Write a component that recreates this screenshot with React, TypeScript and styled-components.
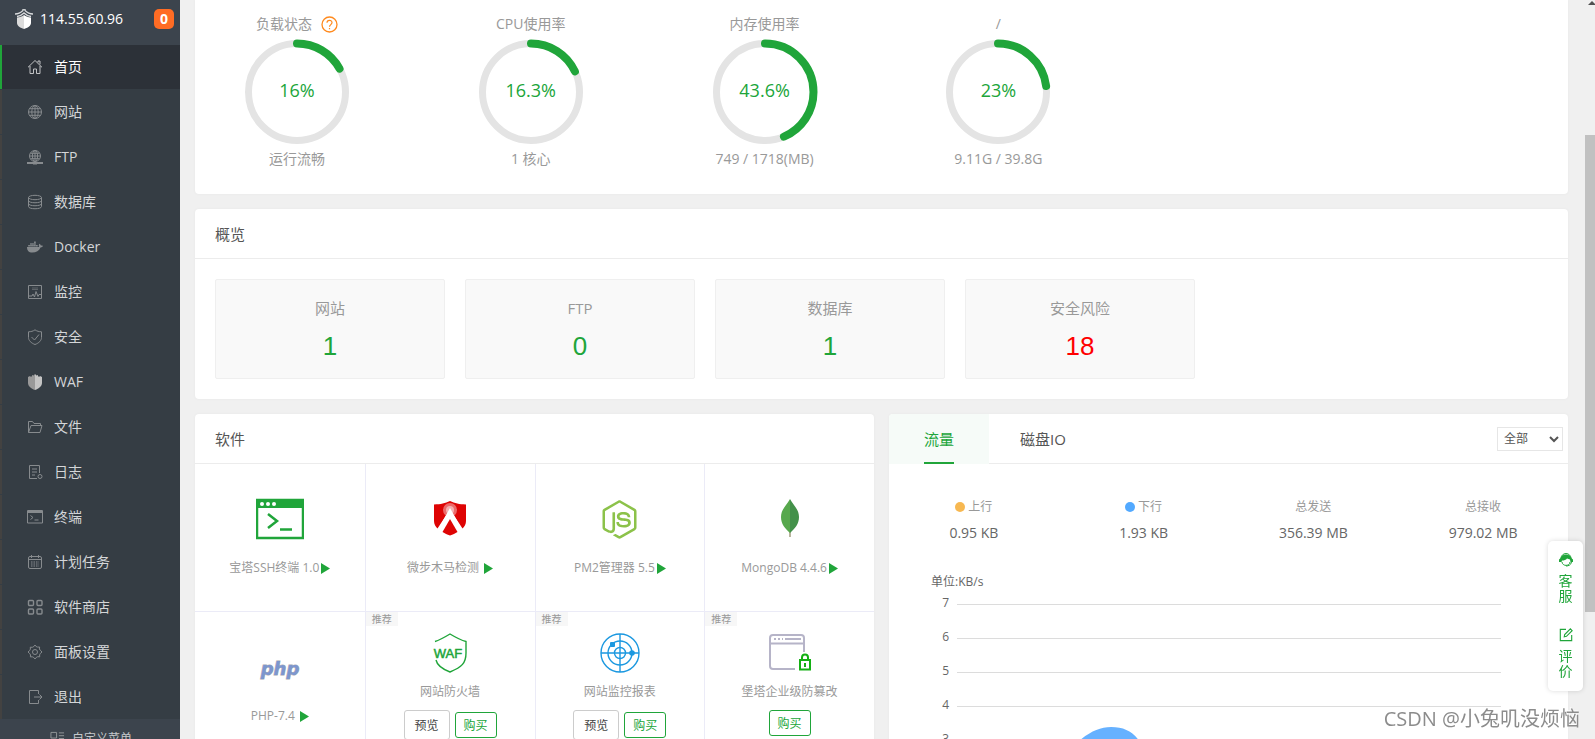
import React from "react";
import styled, { createGlobalStyle } from "styled-components";
import { FaDocker, FaNodeJs } from "react-icons/fa";

const GREEN = "#20a53a";

const GlobalStyle = createGlobalStyle`
  *, *::before, *::after { box-sizing: border-box; }
  body {
    margin: 0;
    overflow: hidden;
    background: #f0f0f0;
    color: #666;
    font-family: "Open Sans", "Noto Sans CJK SC", sans-serif;
    font-size: 12px;
    line-height: 20px;
  }
  button, select { font-family: inherit; }
  ul { list-style: none; margin: 0; padding: 0; }
  svg { display: block; flex: none; }
`;

/* ---------- shell ---------- */

const Shell = styled.div`
  display: flex;
  height: 100vh;
  overflow: hidden;
`;

const Sidebar = styled.aside`
  display: flex;
  flex-direction: column;
  flex: none;
  width: 180px;
  background: #353d44;
`;

const ServerBar = styled.header`
  display: flex;
  align-items: center;
  flex: none;
  height: 45px;
  padding: 0 6px 7px 15px;
  background: #3c444d;
  color: #fff;
  font-size: 14px;
`;

const ServerIp = styled.span`
  flex: 1;
  padding-left: 7px;
`;

const MessageCount = styled.span`
  width: 20px;
  height: 20px;
  border-radius: 5px;
  background: #ff6c24;
  font-weight: 700;
  text-align: center;
`;

const Menu = styled.ul`
  display: flex;
  flex-direction: column;
  flex: none;
  gap: 1px;
`;

const MenuLink = styled.a<{ $active?: boolean }>`
  display: flex;
  align-items: center;
  gap: 11px;
  height: 44px;
  padding-left: 25px;
  border-left: 2px solid ${(p) => (p.$active ? GREEN : "#434241")};
  background: ${(p) => (p.$active ? "#2c3138" : "transparent")};
  color: ${(p) => (p.$active ? "#fff" : "#d4d6d8")};
  font-size: 14px;
  text-decoration: none;

  svg { color: ${(p) => (p.$active ? "#c0c2c4" : "#878b8e")}; }
`;

const CustomMenu = styled.button`
  display: flex;
  flex: none;
  gap: 7px;
  height: 40px;
  padding: 10px 0 0 50px;
  border: 0;
  background: #3c444d;
  color: #c4c7ca;
  font-size: 12px;
  line-height: 20px;

  svg { margin-top: 2px; color: #93979a; }
`;

const Main = styled.main`
  display: flex;
  flex-direction: column;
  flex: 1;
  gap: 15px;
  min-width: 0;
  padding: 0 17px 0 15px;
`;

const ScrollTrack = styled.div`
  display: flex;
  flex-direction: column;
  align-items: flex-end;
  flex: none;
  width: 10px;
  background: #f0f0f0;

  &::after {
    content: "";
    flex: 21;
  }
`;

const ScrollThumb = styled.div`
  flex: 79;
  width: 10px;
  margin-top: 130px;
  background: #c1c1c1;
`;

/* ---------- panels ---------- */

const Panel = styled.section`
  flex: none;
  min-width: 0;
  border-radius: 4px;
  background: #fff;
  box-shadow: 0 0 2px #e4e4e4;
`;

const StatusPanel = styled(Panel)`
  border-radius: 0 0 4px 4px;
  padding: 14px 0 25px;
`;

const PanelTitle = styled.h2`
  height: 50px;
  margin: 0;
  padding: 0 20px;
  border-bottom: 1px solid #ececec;
  color: #555;
  font-size: 15px;
  font-weight: 400;
  line-height: 50px;
`;

const Gauges = styled.ul`
  display: grid;
  grid-template-columns: repeat(6, 1fr);
  margin: 0 -15px;
`;

const Gauge = styled.li`
  display: flex;
  flex-direction: column;
  align-items: center;
  color: #999;
  font-size: 14px;
`;

const GaugeTitle = styled.div`
  display: flex;
  align-items: center;
  gap: 9px;
`;

const GaugeDial = styled.div`
  display: grid;
  place-items: center;
  margin: 5px 0 4px;
  color: ${GREEN};
  font-size: 18px;

  > * { grid-area: 1 / 1; }
  > span { padding-bottom: 4px; }
`;

const OverviewCards = styled.ul`
  display: grid;
  grid-template-columns: repeat(auto-fill, 230px);
  gap: 20px;
  padding: 20px;
`;

const OverviewCard = styled.li`
  display: flex;
  flex-direction: column;
  align-items: center;
  gap: 13px;
  height: 100px;
  padding-top: 18px;
  border: 1px solid #efefef;
  border-radius: 2px;
  background: #f9f9f9;
  color: #999;
  font-size: 15px;
`;

const OverviewCount = styled.a<{ $alert?: boolean }>`
  color: ${(p) => (p.$alert ? "#f00" : GREEN)};
  font-family: "Liberation Sans", sans-serif;
  font-size: 26px;
  line-height: 30px;
  text-decoration: none;
`;

const Columns = styled.div`
  display: grid;
  grid-template-columns: 1fr 1fr;
  gap: 15px;
`;

/* ---------- software ---------- */

const SoftwareGrid = styled.ul`
  display: grid;
  grid-template-columns: repeat(4, 1fr);
`;

const SoftwareIcon = styled.div`
  display: grid;
  place-items: center;
  height: 48px;
`;

const SoftwareCell = styled.li<{ $promoted?: boolean }>`
  position: relative;
  display: flex;
  flex-direction: column;
  align-items: center;
  gap: ${(p) => (p.$promoted ? "5px" : "15px")};
  height: 148px;
  padding-top: ${(p) => (p.$promoted ? "17px" : "31px")};
  border-left: 1px solid #ebebf7;
  border-bottom: 1px solid #ebebf7;
  color: #999;

  &:nth-child(4n + 1) { border-left: 0; }
`;

const SoftwareName = styled.span`
  display: flex;
  align-items: center;
  gap: 2px;
  white-space: pre;
`;

const Recommended = styled.span`
  position: absolute;
  top: 0;
  left: 0;
  width: 32px;
  height: 14px;
  background: #f7f7f7;
  font-size: 10px;
  line-height: 14px;
  text-align: center;
`;

const SoftwareActions = styled.div`
  display: flex;
  align-items: center;
  gap: 5px;
  margin-top: 3px;
`;

const BuyButton = styled.button`
  width: 42px;
  height: 26px;
  padding: 0;
  border: 1px solid ${GREEN};
  border-radius: 3px;
  background: #fff;
  color: ${GREEN};
  font-size: 12px;
`;

const PreviewButton = styled(BuyButton)`
  width: 46px;
  height: 30px;
  border-color: #ccc;
  color: #444;
`;

/* ---------- traffic ---------- */

const TabBar = styled.div`
  display: flex;
  align-items: center;
  height: 50px;
  padding-right: 5px;
  border-bottom: 1px solid #ececec;
`;

const Tab = styled.button<{ $active?: boolean }>`
  min-width: 100px;
  height: 50px;
  padding: 0 31px;
  border: 0;
  border-radius: 4px 0 0 0;
  background: ${(p) => (p.$active ? "#f6fbf8" : "transparent")};
  color: ${(p) => (p.$active ? GREEN : "#555")};
  font-size: 15px;

  span {
    display: inline-block;
    height: 50px;
    border-bottom: 2px solid ${(p) => (p.$active ? GREEN : "transparent")};
    line-height: 50px;
  }
`;

const NetworkSelect = styled.select`
  width: 66px;
  height: 24px;
  margin-left: auto;
  padding: 0 2px;
  border: 1px solid #e6e6e6;
  background: #fff;
  color: #555;
  font-size: 12px;
`;

const TrafficTotals = styled.ul`
  display: grid;
  grid-template-columns: repeat(4, 1fr);
  padding-top: 33px;
`;

const TrafficTotal = styled.li`
  display: flex;
  flex-direction: column;
  align-items: center;
  gap: 6px;
  color: #999;
`;

const TrafficLabel = styled.span`
  display: flex;
  align-items: center;
  gap: 3px;
`;

const Dot = styled.i<{ $color: string }>`
  width: 10px;
  height: 10px;
  border-radius: 50%;
  background: ${(p) => p.$color};
`;

const TrafficValue = styled.strong`
  color: #666;
  font-size: 14px;
  font-weight: 400;
`;

const Chart = styled.figure`
  position: relative;
  margin: 0;
  padding: 29px 67px 20px 42px;
`;

const AxisUnit = styled.figcaption`
  height: 22px;
`;

const AxisRow = styled.div`
  display: flex;
  align-items: flex-start;
  gap: 8px;
  height: 34px;

  span {
    width: 18px;
    line-height: 18px;
    text-align: right;
  }
  &::after {
    content: "";
    flex: 1;
    height: 1px;
    margin-top: 10px;
    background: #dcdcdc;
  }
`;

const DownstreamArea = styled.svg`
  position: absolute;
  top: 184px;
  left: 26%;
  width: 13%;
  height: 80px;
`;

/* ---------- overlays ---------- */

const ServiceBar = styled.div`
  position: fixed;
  right: 12px;
  bottom: 48px;
  display: flex;
  flex-direction: column;
  gap: 25px;
  width: 35px;
  height: 150px;
  padding-top: 12px;
  border-radius: 5px;
  background: #fff;
  box-shadow: 0 0 5px rgba(0, 0, 0, 0.15);
`;

const ServiceButton = styled.button`
  display: flex;
  flex-direction: column;
  align-items: center;
  gap: 6px;
  padding: 0 10px;
  border: 0;
  background: transparent;
  color: ${GREEN};
  font-size: 14px;
  line-height: 15px;
`;

const Watermark = styled.div`
  position: fixed;
  right: 15px;
  bottom: 5px;
  color: #8c8c8c;
  font-size: 20px;
  line-height: 30px;
  text-shadow: -1px -1px 0 #fff;
`;

/* ---------- icons ---------- */

const Line = ({ children, size = 16 }: { children: React.ReactNode; size?: number }) => (
  <svg width={size} height={size} viewBox="0 0 16 16" fill="none" stroke="currentColor" strokeWidth="1">
    {children}
  </svg>
);

const icons = {
  home: (
    <Line>
      <path d="M1 8.3 8 1.5l7 6.8M3 7v7.5h3.5V10h3v4.5H13V7M11 3.5V2h2v3.4" />
    </Line>
  ),
  site: (
    <Line>
      <circle cx="8" cy="8" r="6.5" />
      <ellipse cx="8" cy="8" rx="3.2" ry="6.5" />
      <path d="M8 1.5v13M1.5 8h13M2.5 4.7h11M2.5 11.3h11" />
    </Line>
  ),
  ftp: (
    <Line>
      <circle cx="8" cy="7" r="5.5" />
      <ellipse cx="8" cy="7" rx="2.6" ry="5.5" />
      <path d="M8 1.5v11M2.5 7h11M3.5 4.3h9M3.5 9.7h9" />
      <path d="M0 14h16M6 14.5h4" strokeWidth="2" />
    </Line>
  ),
  database: (
    <Line>
      <ellipse cx="8" cy="3.5" rx="6.5" ry="2.2" />
      <path d="M1.5 3.5v9c0 3 13 3 13 0v-9M1.5 6.5c0 3 13 3 13 0M1.5 9.5c0 3 13 3 13 0" />
    </Line>
  ),
  docker: <FaDocker size={16} />,
  monitor: (
    <Line>
      <path d="M1.5 1.5h13v13h-13z" />
      <path d="M5 4h6M5 5.5h6" opacity=".5" />
      <path d="M2 12h3l1-2 1.5 3L9 7.5l2 5 1-2h2" />
    </Line>
  ),
  security: (
    <Line>
      <path d="M8 .8c2 1.5 4 1.9 6.5 2v5.7c0 3-2.500 5.500-6.500 7-4-1.500-6.500-4-6.500-7V2.800C4 2.700 6 2.300 8 .8z" />
      <path d="m4.500 8 3 3 4.500-5.500" />
    </Line>
  ),
  waf: (
    <svg width="16" height="16" viewBox="0 0 16 16">
      <path d="M8 0 6.500 1.500 5 1v1.500H3V2L1 3v6c0 3 3 5.500 7 7z" fill="#999" />
      <path d="m8 0 1.500 1.500L11 1v1.500h2V2l2 1v6c0 3-3 5.500-7 7z" fill="#c4c4c4" />
    </svg>
  ),
  files: (
    <Line>
      <path d="M1.500 13.500v-11h4l1.500 2h6.500v2M1.500 13.500l2.500-7h11l-2 7z" />
    </Line>
  ),
  logs: (
    <Line>
      <path d="M10 14.500H2.500v-13h10V9M5 5h5M5 8h5M5 11h3" />
      <circle cx="13" cy="12.500" r="2" />
    </Line>
  ),
  terminal: (
    <Line>
      <path d="M.5 1.500h15v12.500H.5z" />
      <path d="M1 3h14" strokeWidth="2" />
      <path d="m3.500 6.500 2.500 2-2.500 2M7.500 11h4" />
    </Line>
  ),
  cron: (
    <Line>
      <rect x="1.500" y="2.500" width="13" height="12" rx="1.500" />
      <path d="M4.500 1v3M11.500 1v3M2 5.500h12" />
      <path d="M4 8h8M4 10h8M4 12h8" strokeDasharray="1.500 1" />
    </Line>
  ),
  store: (
    <Line>
      <rect x="1.500" y="1.500" width="5" height="5" rx="1" strokeWidth="1.400" />
      <rect x="10" y="1.500" width="5" height="5" rx="1" strokeWidth="1.400" />
      <rect x="1.500" y="10" width="5" height="5" rx="1" strokeWidth="1.400" />
      <rect x="10" y="10" width="5" height="5" rx="1" strokeWidth="1.400" />
    </Line>
  ),
  settings: (
    <Line>
      <path d="M6.900 2.500 8 1l1.100 1.500 1.500.6L12.600 3l-.2 2 .9 1.300L15 8l-1.700 1.500-.7 1.400.1 1.900-2-.1-1.500.8L8 15l-1.200-1.500-1.500-.7-1.900.1.1-2-.8-1.400L1 8l1.700-1.500.7-1.400-.1-1.900 2 .1z" />
      <circle cx="8" cy="8" r="2.500" />
    </Line>
  ),
  logout: (
    <Line>
      <path d="M11.500 5V1.500h-9v13h9V11M7 8h8M12.500 5.500 15 8l-2.500 2.500" />
    </Line>
  ),
};

const BaotaLogo = () => (
  <svg width="18" height="20" viewBox="0 0 18 20">
    <path d="M0 5c4 0 6-1.500 8-3.500V0h2v1.500C12 3.500 14 5 18 5M2 7.500C5 7 7.500 5.500 9 4c1.500 1.500 4 3 7 3.500" fill="none" stroke="#d8dadc" strokeWidth="1.300" />
    <path d="M9 6v14c-3.500-1-7-3-7-6V8.500C5 8.300 7 7.500 9 6z" fill="#dcdcdc" />
    <path d="M9 6v14c3.500-1 7-3 7-6V8.500C13 8.300 11 7.500 9 6z" fill="#fff" />
  </svg>
);

const HelpIcon = () => (
  <svg width="17" height="17" viewBox="0 0 17 17" fill="none" stroke="#ff8a1e">
    <circle cx="8.500" cy="8.500" r="7.500" strokeWidth="1.300" />
    <path d="M6 6.800C6 3.500 11 3.500 11 6.600c0 2-2.500 2-2.500 4.200M8.500 12v1.300" strokeWidth="1.200" />
  </svg>
);

const PlayIcon = () => (
  <svg width="9" height="11" viewBox="0 0 9 11">
    <path d="M0 0l9 5.500L0 11z" fill={GREEN} />
  </svg>
);

const Ring = ({ value }: { value: number }) => (
  <svg width="106" height="106" viewBox="0 0 106 106" fill="none">
    <circle cx="53" cy="53" r="48.500" stroke="#e4e4e4" strokeWidth="7" />
    <circle
      cx="53"
      cy="53"
      r="48.500"
      stroke={GREEN}
      strokeWidth="8"
      strokeLinecap="round"
      pathLength="100"
      strokeDasharray={`${value} 100`}
      transform="rotate(-90 53 53)"
    />
  </svg>
);

const SshIcon = () => (
  <svg width="48" height="48" viewBox="0 0 48 48" fill="none" stroke={GREEN}>
    <rect x="1" y="5" width="46" height="38" strokeWidth="2.500" />
    <path d="M0 8.500h48" strokeWidth="9" />
    <g fill="#fff" stroke="none">
      <circle cx="6" cy="9" r="2" />
      <circle cx="12" cy="9" r="2" />
      <circle cx="18" cy="9" r="2" />
    </g>
    <path d="m12 19 9 7-9 7M24 34.500h12" strokeWidth="2.500" />
  </svg>
);

const ThreatIcon = () => (
  <svg width="48" height="48" viewBox="0 0 48 48">
    <path d="M24 6c5 2.500 9 3.200 16 3.400V26c0 3-1.500 5.500-3.500 7.500L27 19h-6l-9.500 14.500C9.500 31.500 8 29 8 26V9.400C15 9.200 19 8.500 24 6z" fill="#de0404" />
    <circle cx="24" cy="15" r="7" fill="#ec6a6a" />
    <circle cx="24" cy="15" r="4" fill="#f5b0b0" />
    <path d="M24 13 12 34.500l3 2.500 9-15 9 15 3-2.500z" fill="#fff" />
    <path d="m24 24 7.500 13C29 38.500 27 39.500 24 40.500c-3-1-5-2-7.500-3.500z" fill="#de0404" />
  </svg>
);

const MongoIcon = () => (
  <svg width="48" height="48" viewBox="0 0 48 48">
    <path d="M24 36v6" stroke="#a6a385" strokeWidth="1.600" />
    <path d="M24 4c-3 6-9 10-9 18 0 7 4 11.500 9 16z" fill="#57a84d" />
    <path d="M24 4c3 6 9 10 9 18 0 7-4 11.500-9 16z" fill="#43914a" />
  </svg>
);

const PhpIcon = () => (
  <svg width="48" height="48" viewBox="0 0 48 48">
    <text
      x="24"
      y="32"
      textAnchor="middle"
      fontFamily="DejaVu Sans, sans-serif"
      fontSize="18"
      fontWeight="700"
      fontStyle="italic"
      fill="#7c96cf"
      stroke="#a9a9b0"
      strokeWidth="1"
      paintOrder="stroke"
    >
      php
    </text>
  </svg>
);

const WafIcon = () => (
  <svg width="40" height="40" viewBox="0 0 40 40" fill="none" stroke={GREEN} strokeWidth="1.400">
    <path d="M5 8.500C10 7 15 4 20 1c5 3 10 6 16 7.500V20c0 10-4 14-16 19C11 35.500 7 32 6 27" />
    <text x="18" y="25" textAnchor="middle" fontFamily="Liberation Sans, sans-serif" fontSize="13" fill={GREEN} strokeWidth=".5">
      WAF
    </text>
  </svg>
);

const RadarIcon = () => (
  <svg width="40" height="40" viewBox="0 0 40 40" fill="none" stroke="#1b98e0" strokeWidth="1.400">
    <circle cx="20" cy="20" r="19" />
    <circle cx="20" cy="20" r="12" />
    <circle cx="20" cy="20" r="5.500" />
    <path d="M20 1v38M1 20h38" />
    <circle cx="32" cy="20" r="2.800" fill="#1b98e0" stroke="none" />
    <rect x="10" y="9" width="5" height="5" rx="1" fill="#1b98e0" stroke="none" />
  </svg>
);

const TamperIcon = () => (
  <svg width="42" height="40" viewBox="0 0 42 40" fill="none" stroke="#b6b4c8" strokeWidth="2">
    <path d="M26 36H4a3 3 0 0 1-3-3V5a3 3 0 0 1 3-3h28a3 3 0 0 1 3 3v14M1 10.500h34" />
    <path d="M5 6h9" strokeDasharray="2 2" />
    <path d="M16 6h16" />
    <g stroke="#14b014">
      <path d="M31 27h10v9.500H31zM33 26v-1.500a3 3 0 0 1 6 0V26" />
      <path d="M36 30v4" />
    </g>
  </svg>
);

const HeadsetIcon = () => (
  <svg width="14" height="14" viewBox="0 0 14 14">
    <path d="M2 5.500a5 5 0 0 1 10 0" fill="none" stroke={GREEN} strokeWidth="1" />
    <path d="M0 6.500C1 6 1.500 4.500 3 3c2-2 6-2 8 0 1.500 1.500 2 3 3 3.500V9h-2.500L11 6.500 8 5.500C7 7 5 7.500 3 7.500L2.500 9H0z" fill={GREEN} />
    <path d="M3 9c.5 4.500 7.500 4.500 8 0M12.500 9c-.5 3-3 4-5.500 4" fill="none" stroke={GREEN} strokeWidth="1" />
  </svg>
);

/* ---------- data ---------- */

const menu: { label: string; icon: keyof typeof icons }[] = [
  { label: "首页", icon: "home" },
  { label: "网站", icon: "site" },
  { label: "FTP", icon: "ftp" },
  { label: "数据库", icon: "database" },
  { label: "Docker", icon: "docker" },
  { label: "监控", icon: "monitor" },
  { label: "安全", icon: "security" },
  { label: "WAF", icon: "waf" },
  { label: "文件", icon: "files" },
  { label: "日志", icon: "logs" },
  { label: "终端", icon: "terminal" },
  { label: "计划任务", icon: "cron" },
  { label: "软件商店", icon: "store" },
  { label: "面板设置", icon: "settings" },
  { label: "退出", icon: "logout" },
];

const gauges = [
  { title: "负载状态", text: "16%", value: 17, note: "运行流畅", help: true },
  { title: "CPU使用率", text: "16.3%", value: 18, note: "1 核心" },
  { title: "内存使用率", text: "43.6%", value: 43.6, note: "749 / 1718(MB)" },
  { title: "/", text: "23%", value: 23, note: "9.11G / 39.8G" },
];

const overview = [
  { label: "网站", count: 1 },
  { label: "FTP", count: 0 },
  { label: "数据库", count: 1 },
  { label: "安全风险", count: 18, alert: true },
];

const installed = [
  { name: "宝塔SSH终端 1.0", icon: <SshIcon /> },
  { name: "微步木马检测 ", icon: <ThreatIcon /> },
  { name: "PM2管理器 5.5", icon: <FaNodeJs size={39} color="#8cc24a" /> },
  { name: "MongoDB 4.4.6", icon: <MongoIcon /> },
  { name: "PHP-7.4 ", icon: <PhpIcon /> },
];

const promoted = [
  { name: "网站防火墙", icon: <WafIcon />, preview: true },
  { name: "网站监控报表", icon: <RadarIcon />, preview: true },
  { name: "堡塔企业级防篡改", icon: <TamperIcon /> },
];

const totals = [
  { label: "上行", value: "0.95 KB", color: "#f7b851" },
  { label: "下行", value: "1.93 KB", color: "#52a9ff" },
  { label: "总发送", value: "356.39 MB" },
  { label: "总接收", value: "979.02 MB" },
];

export default function App() {
  return (
    <>
      <GlobalStyle />
      <Shell>
        <Sidebar>
          <ServerBar>
            <BaotaLogo />
            <ServerIp>114.55.60.96</ServerIp>
            <MessageCount>0</MessageCount>
          </ServerBar>
          <nav>
            <Menu>
              {menu.map((item, i) => (
                <li key={item.label}>
                  <MenuLink href="#" $active={i === 0}>
                    {icons[item.icon]}
                    {item.label}
                  </MenuLink>
                </li>
              ))}
            </Menu>
          </nav>
          <CustomMenu type="button">
            <Line size={15}>
              <path d="M1 1.500h6v6H1zM1 11h6v4H1zM9.500 2H15M9.500 5H15M9.500 8H15M9.500 12H15" />
            </Line>
            自定义菜单
          </CustomMenu>
        </Sidebar>

        <Main>
          <StatusPanel>
            <Gauges>
              {gauges.map((g) => (
                <Gauge key={g.title}>
                  <GaugeTitle>
                    {g.title}
                    {g.help && <HelpIcon />}
                  </GaugeTitle>
                  <GaugeDial>
                    <Ring value={g.value} />
                    <span>{g.text}</span>
                  </GaugeDial>
                  {g.note}
                </Gauge>
              ))}
            </Gauges>
          </StatusPanel>

          <Panel>
            <PanelTitle>概览</PanelTitle>
            <OverviewCards>
              {overview.map((o) => (
                <OverviewCard key={o.label}>
                  {o.label}
                  <OverviewCount href="#" $alert={o.alert}>
                    {o.count}
                  </OverviewCount>
                </OverviewCard>
              ))}
            </OverviewCards>
          </Panel>

          <Columns>
            <Panel>
              <PanelTitle>软件</PanelTitle>
              <SoftwareGrid>
                {installed.map((s) => (
                  <SoftwareCell key={s.name}>
                    <SoftwareIcon>{s.icon}</SoftwareIcon>
                    <SoftwareName>
                      {s.name}
                      <PlayIcon />
                    </SoftwareName>
                  </SoftwareCell>
                ))}
                {promoted.map((s) => (
                  <SoftwareCell key={s.name} $promoted>
                    <Recommended>推荐</Recommended>
                    <SoftwareIcon>{s.icon}</SoftwareIcon>
                    <SoftwareName>{s.name}</SoftwareName>
                    <SoftwareActions>
                      {s.preview && <PreviewButton type="button">预览</PreviewButton>}
                      <BuyButton type="button">购买</BuyButton>
                    </SoftwareActions>
                  </SoftwareCell>
                ))}
              </SoftwareGrid>
            </Panel>

            <Panel>
              <TabBar>
                <Tab type="button" $active>
                  <span>流量</span>
                </Tab>
                <Tab type="button">
                  <span>磁盘IO</span>
                </Tab>
                <NetworkSelect aria-label="网卡" defaultValue="all">
                  <option value="all">全部</option>
                </NetworkSelect>
              </TabBar>
              <TrafficTotals>
                {totals.map((t) => (
                  <TrafficTotal key={t.label}>
                    <TrafficLabel>
                      {t.color && <Dot $color={t.color} />}
                      {t.label}
                    </TrafficLabel>
                    <TrafficValue>{t.value}</TrafficValue>
                  </TrafficTotal>
                ))}
              </TrafficTotals>
              <Chart>
                <AxisUnit>单位:KB/s</AxisUnit>
                {[7, 6, 5, 4, 3].map((n) => (
                  <AxisRow key={n}>
                    <span>{n}</span>
                  </AxisRow>
                ))}
                <DownstreamArea viewBox="0 0 88 80" preserveAspectRatio="none">
                  <path d="M0 26C18 8 30 0 45 0c15 0 24 6 32 20 6 14 8 40 11 60H0z" fill="#66b1ff" />
                </DownstreamArea>
              </Chart>
            </Panel>
          </Columns>
        </Main>

        <ScrollTrack>
          <svg width="7" height="5" viewBox="0 0 7 5">
            <path d="M0 5 4 1l4 4z" fill="#505050" />
          </svg>
          <ScrollThumb />
        </ScrollTrack>
      </Shell>

      <ServiceBar>
        <ServiceButton type="button">
          <HeadsetIcon />
          客服
        </ServiceButton>
        <ServiceButton type="button">
          <Line size={14}>
            <path d="M8 1.500H1.500v13h13V8M6 10l.5-2.500L13 1l2 2-6.500 6.500z" strokeWidth="1.300" />
          </Line>
          评价
        </ServiceButton>
      </ServiceBar>
      <Watermark>CSDN @小兔叽没烦恼</Watermark>
    </>
  );
}
